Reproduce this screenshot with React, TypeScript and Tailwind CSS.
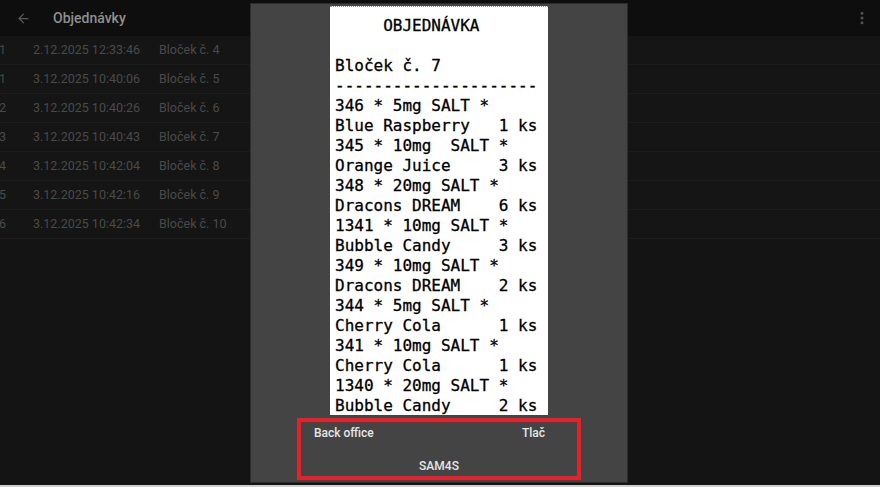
import { ArrowLeft, EllipsisVertical } from "lucide-react";

const orders = [
  { no: "1", date: "2.12.2025 12:33:46", name: "Bloček č. 4" },
  { no: "1", date: "3.12.2025 10:40:06", name: "Bloček č. 5" },
  { no: "2", date: "3.12.2025 10:40:26", name: "Bloček č. 6" },
  { no: "3", date: "3.12.2025 10:40:43", name: "Bloček č. 7" },
  { no: "4", date: "3.12.2025 10:42:04", name: "Bloček č. 8" },
  { no: "5", date: "3.12.2025 10:42:16", name: "Bloček č. 9" },
  { no: "6", date: "3.12.2025 10:42:34", name: "Bloček č. 10" },
];

const receipt = [
  "     OBJEDNÁVKA",
  "",
  "Bloček č. 7",
  "---------------------",
  "346 * 5mg SALT *",
  "Blue Raspberry   1 ks",
  "345 * 10mg  SALT *",
  "Orange Juice     3 ks",
  "348 * 20mg SALT *",
  "Dracons DREAM    6 ks",
  "1341 * 10mg SALT *",
  "Bubble Candy     3 ks",
  "349 * 10mg SALT *",
  "Dracons DREAM    2 ks",
  "344 * 5mg SALT *",
  "Cherry Cola      1 ks",
  "341 * 10mg SALT *",
  "Cherry Cola      1 ks",
  "1340 * 20mg SALT *",
  "Bubble Candy     2 ks",
];

export default function App() {
  return (
    <div className="relative w-[880px] h-[487px] overflow-hidden bg-[#141414] font-['Roboto',sans-serif]">
      <div className="flex flex-col h-[485px]">
        <header className="h-[36px] bg-[#0e0e0e] flex items-center px-[16px]">
          <ArrowLeft className="w-[15px] h-[15px] text-[#5a5a5a]" strokeWidth={2} />
          <h1 className="ml-[22px] text-[14px] font-medium text-[#8f8f8f]">Objednávky</h1>
          <EllipsisVertical className="ml-auto mr-[-6px] w-[16px] h-[16px] text-[#555]" strokeWidth={2.5} />
        </header>
        <div className="flex-1 bg-[#141414]">
          {orders.map((o, i) => (
            <div
              key={i}
              className="h-[29px] flex items-center border-b border-[#1c1c1c] bg-[#151515] text-[12.5px] text-[#4a4a4a]"
            >
              <span className="w-[34px] ml-[-1px]">{o.no}</span>
              <span className="w-[126px]">{o.date}</span>
              <span>{o.name}</span>
            </div>
          ))}
        </div>
      </div>
      <div className="h-[2px] bg-[#cfcfcf]" />

      <div className="absolute left-[250px] top-[3px] w-[378px] h-[480px] bg-[#444444] border border-[#2c2c2c] flex flex-col items-center">
        <div className="mt-[2px] w-[218px] h-[409px] overflow-hidden bg-white border-t border-dotted border-[#9a9a9a] pt-[9px] px-[5px]">
          <pre className="font-['DejaVu_Sans_Mono',monospace] text-[16px] leading-[20px] text-black [-webkit-text-stroke:0.3px_black]">
            {receipt.join("\n")}
          </pre>
        </div>
        <div className="mt-[3px] w-[284px] h-[62px] border-[4px] border-[#e8202a] flex flex-col text-[12px] font-medium text-[#e6e6e6]">
          <div className="flex justify-between pl-[13px] pr-[32px] pt-[2px]">
            <span>Back office</span>
            <span>Tlač</span>
          </div>
          <div className="mt-[15px] text-center">SAM4S</div>
        </div>
      </div>
    </div>
  );
}
